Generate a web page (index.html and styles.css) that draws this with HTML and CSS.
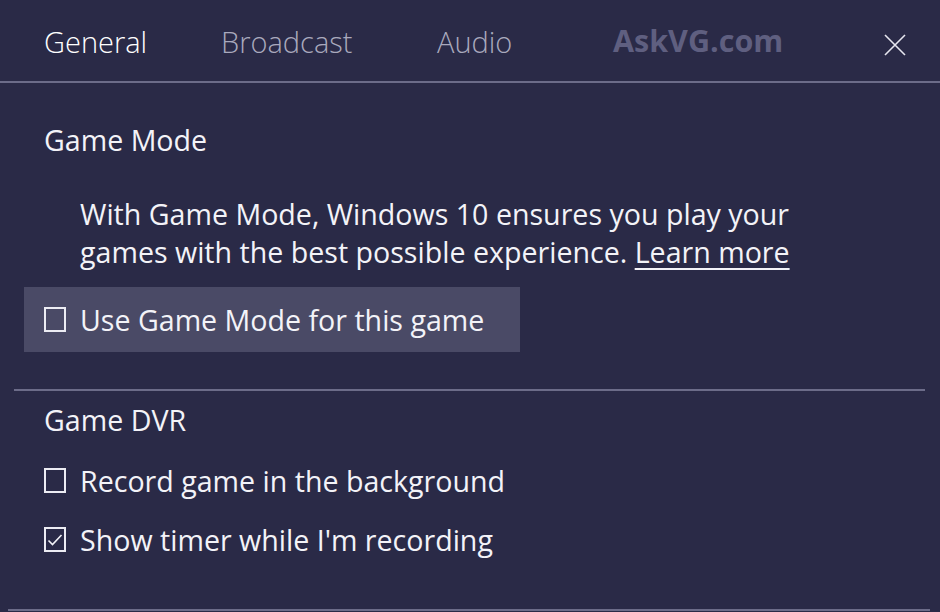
FILE: index.html
```html
<!DOCTYPE html>
<html lang="en">
<head>
<meta charset="utf-8">
<title>Game bar settings</title>
<link rel="stylesheet" href="styles.css">
</head>
<body>
<div class="app">
  <header class="tabs">
    <span class="tab tab-active">General</span>
    <span class="tab">Broadcast</span>
    <span class="tab">Audio</span>
    <span class="tab-spacer"></span>
    <button class="close" aria-label="Close">
      <svg width="22" height="22" viewBox="0 0 22 22"><path d="M1 1L21 21M21 1L1 21" stroke="#e6e6ef" stroke-width="1.6" fill="none"/></svg>
    </button>
    <span class="watermark">AskVG.com</span>
  </header>

  <section class="section section-mode">
    <h2 class="heading">Game Mode</h2>
    <p class="desc">With Game Mode, Windows 10 ensures you play your games with the best possible experience. <a class="link" href="#">Learn more</a></p>
    <label class="check check-hover">
      <span class="box"></span>
      <span class="label">Use Game Mode for this game</span>
    </label>
  </section>

  <div class="divider"></div>

  <section class="section section-dvr">
    <h2 class="heading">Game DVR</h2>
    <label class="check">
      <span class="box"></span>
      <span class="label">Record game in the background</span>
    </label>
    <label class="check">
      <span class="box box-checked">
        <svg width="16" height="14" viewBox="0 0 16 14"><path d="M1.5 7.5L5.5 11.5L14.5 2" stroke="#f2f2f7" stroke-width="1.6" fill="none"/></svg>
      </span>
      <span class="label">Show timer while I'm recording</span>
    </label>
  </section>

  <div class="bottom-line"></div>
</div>
</body>
</html>
```

FILE: styles.css
```css
* { box-sizing: border-box; }
html, body {
  margin: 0;
  padding: 0;
  background: #2a2a47;
}
body {
  font-family: "Open Sans", "Noto Sans", sans-serif;
  color: #f3f3f8;
  font-size: 28.6px;
  line-height: 38px;
}
.app {
  width: 940px;
  height: 612px;
  overflow: hidden;
  position: relative;
  display: flex;
  flex-direction: column;
}
.tabs {
  position: relative;
  height: 83px;
  padding: 23px 0 0 44px;
  border-bottom: 2px solid #6c6c89;
  display: grid;
  grid-template-columns: 177px 216px 176px 1fr 80px;
  align-items: start;
}
.tab {
  font-weight: 300;
  font-size: 29px;
  color: #a9a9bd;
  white-space: nowrap;
}
.tab-active { color: #ffffff; }
.close {
  background: none;
  border: 0;
  padding: 0;
  margin: 11px 0 0 24px;
  width: 22px;
  height: 22px;
  display: block;
}
.close svg { display: block; }
.watermark {
  position: absolute;
  left: 613px;
  top: 21px;
  font-family: "Open Sans", sans-serif;
  font-weight: 700;
  font-size: 30.5px;
  color: #5f5f80;
}
.section { padding-left: 44px; }
.heading {
  margin: 0;
  font-size: 28.6px;
  font-weight: 400;
  line-height: 38px;
}
.section-mode .heading { margin-top: 38px; }
.desc {
  margin: 36px 0 16px 36px;
  width: 780px;
}
.link {
  color: #f3f3f8;
  text-decoration: underline;
  text-decoration-thickness: 2px;
  text-underline-offset: 5px;
}
.check {
  display: flex;
  align-items: center;
  gap: 14px;
  height: 57px;
}
.check-hover {
  margin-left: -20px;
  padding-left: 20px;
  width: 496px;
  height: 65px;
  background: #4a4a66;
}
.check + .check { margin-top: 2px; }
.box {
  width: 22px;
  height: 25px;
  border: 2px solid #ececf3;
  flex: none;
  display: flex;
  align-items: center;
  justify-content: center;
}
.label { white-space: nowrap; }
.divider {
  height: 2px;
  margin: 37px 15px 0 14px;
  background: #6c6c89;
}
.section-dvr .heading { margin-top: 10px; }
.section-dvr .heading + .check { margin-top: 13px; }
.bottom-line {
  position: absolute;
  left: 8px;
  right: 10px;
  bottom: 1px;
  height: 2px;
  background: #6c6c89;
}
```
